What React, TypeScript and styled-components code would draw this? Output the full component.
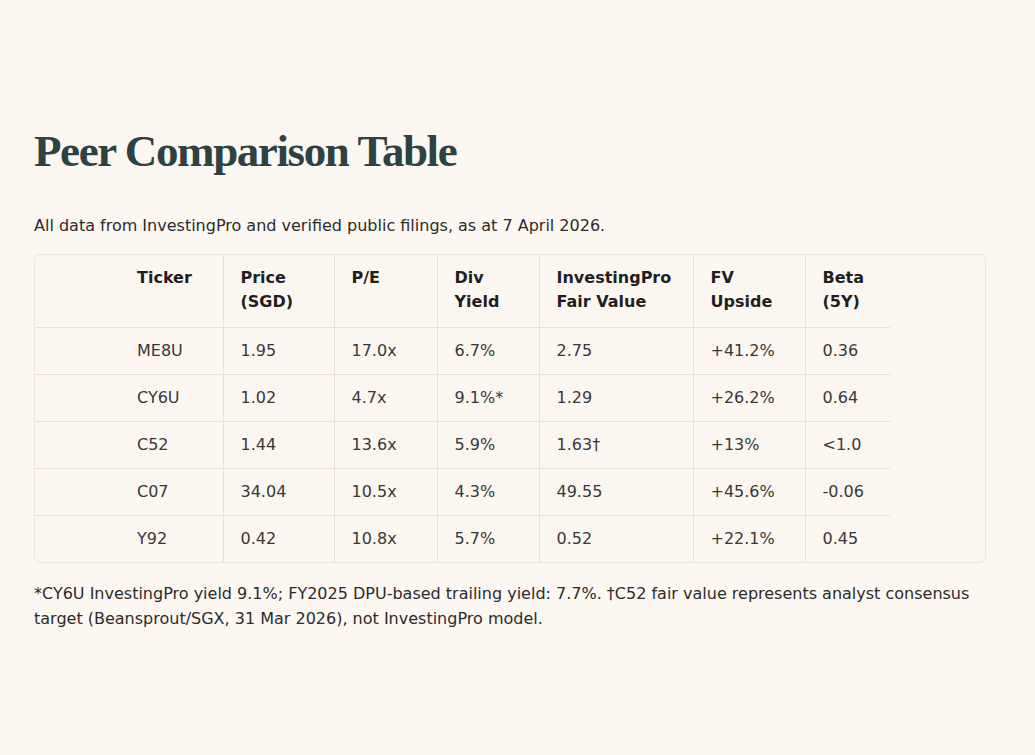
import styled, { createGlobalStyle } from 'styled-components';

const GlobalStyle = createGlobalStyle`
  html, body {
    margin: 0;
    padding: 0;
    background: #fdf7f1;
  }
`;

const Page = styled.div`
  box-sizing: border-box;
  width: 1035px;
  min-height: 755px;
  padding: 124px 49px 0 34px;
  font-family: 'DejaVu Sans', sans-serif;
  color: #2b2b2b;
`;

const Title = styled.h1`
  margin: 0;
  font-family: 'Liberation Serif', serif;
  font-weight: 700;
  font-size: 45px;
  line-height: 54px;
  letter-spacing: -1.4px;
  color: #2d4242;
`;

const Intro = styled.p`
  margin: 36px 0 0;
  font-size: 16px;
  line-height: 24px;
`;

const TableCard = styled.div`
  margin-top: 16px;
  border: 1px solid #ece4dc;
  border-radius: 6px;
  background: #fcf6f0;
  overflow: hidden;
`;

const Table = styled.table`
  border-collapse: collapse;
  width: 855px;
  font-size: 16px;
`;

const Cell = styled.td<{ $first?: boolean; $width: number }>`
  box-sizing: border-box;
  width: ${(p) => p.$width}px;
  padding: 0 0 0 ${(p) => (p.$first ? 102 : 17)}px;
  height: 47px;
  vertical-align: middle;
  border-left: ${(p) => (p.$first ? 'none' : '1px solid #e8e0d8')};
  color: #383838;
`;

const HeadCell = styled(Cell).attrs({ as: 'th' })`
  height: 72px;
  padding-top: 11px;
  vertical-align: top;
  text-align: left;
  font-weight: 700;
  line-height: 24px;
  color: #1f1f1f;
`;

const Row = styled.tr`
  border-bottom: 1px solid #e8e0d8;
`;

const Body = styled.tbody`
  & > tr:last-child {
    border-bottom: none;
  }
`;

const Footnote = styled.p`
  margin: 18px 0 0;
  font-size: 16px;
  line-height: 25px;
`;

const widths = [188, 111, 103, 102, 154, 112, 85];

const headers = [
  ['Ticker'],
  ['Price', '(SGD)'],
  ['P/E'],
  ['Div', 'Yield'],
  ['InvestingPro', 'Fair Value'],
  ['FV', 'Upside'],
  ['Beta', '(5Y)'],
];

const rows = [
  ['ME8U', '1.95', '17.0x', '6.7%', '2.75', '+41.2%', '0.36'],
  ['CY6U', '1.02', '4.7x', '9.1%*', '1.29', '+26.2%', '0.64'],
  ['C52', '1.44', '13.6x', '5.9%', '1.63†', '+13%', '<1.0'],
  ['C07', '34.04', '10.5x', '4.3%', '49.55', '+45.6%', '-0.06'],
  ['Y92', '0.42', '10.8x', '5.7%', '0.52', '+22.1%', '0.45'],
];

const App = () => {
  return (
    <>
      <GlobalStyle />
      <Page>
        <Title>Peer Comparison Table</Title>
        <Intro>
          All data from InvestingPro and verified public filings, as at 7 April 2026.
        </Intro>
        <TableCard>
          <Table>
            <thead>
              <Row>
                {headers.map((lines, i) => (
                  <HeadCell key={i} $first={i === 0} $width={widths[i]}>
                    {lines.map((line, j) => (
                      <div key={j}>{line}</div>
                    ))}
                  </HeadCell>
                ))}
              </Row>
            </thead>
            <Body>
              {rows.map((row) => (
                <Row key={row[0]}>
                  {row.map((value, i) => (
                    <Cell key={i} $first={i === 0} $width={widths[i]}>
                      {value}
                    </Cell>
                  ))}
                </Row>
              ))}
            </Body>
          </Table>
        </TableCard>
        <Footnote>
          *CY6U InvestingPro yield 9.1%; FY2025 DPU-based trailing yield: 7.7%. †C52 fair value
          represents analyst consensus target (Beansprout/SGX, 31 Mar 2026), not InvestingPro
          model.
        </Footnote>
      </Page>
    </>
  );
};

export default App;
